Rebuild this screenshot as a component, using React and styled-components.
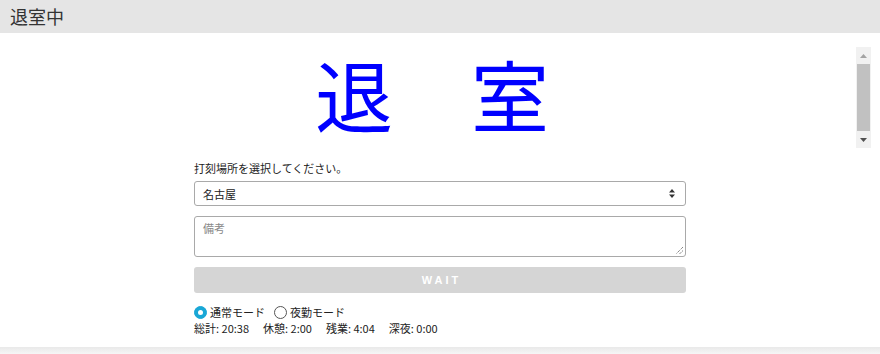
import React from "react";
import styled, { createGlobalStyle } from "styled-components";

const Global = createGlobalStyle`
  html, body { margin: 0; padding: 0; background: #fff; }
  body { font-family: "Noto Sans CJK JP", "Noto Sans", sans-serif; color: #222; }
  * { box-sizing: border-box; }
`;

const Page = styled.div`
  height: 354px;
  display: flex;
  flex-direction: column;
  overflow: hidden;
`;

const Header = styled.header`
  height: 33px;
  flex: none;
  background: #e5e5e5;
  padding-left: 10px;
  font-size: 18px;
  line-height: 33px;
  color: #333;
`;

const Main = styled.main`
  flex: 1;
  padding: 14px 8px 0;
  display: flex;
  flex-direction: column;
`;

const ScrollArea = styled.div`
  height: 101px;
  flex: none;
  margin-right: 1px;
  display: flex;
`;

const BigStatus = styled.div`
  flex: 1;
  color: #0000ff;
  font-size: 78px;
  line-height: 78px;
  padding-top: 7px;
  text-align: center;
  white-space: pre;
`;

const ScrollBar = styled.div`
  width: 15px;
  flex: none;
  background: #f1f1f1;
  display: flex;
  flex-direction: column;
  align-items: center;
`;

const ScrollButton = styled.div`
  height: 17px;
  width: 100%;
  display: flex;
  align-items: center;
  justify-content: center;
`;

const Thumb = styled.div`
  width: 13px;
  height: 67px;
  background: #c1c1c1;
`;

const ScrollRest = styled.div`
  flex: 1;
`;

const Form = styled.div`
  width: 492px;
  margin: 12px auto 0;
  display: flex;
  flex-direction: column;
`;

const Label = styled.div`
  font-size: 11px;
  line-height: 16px;
  color: #222;
  margin-bottom: 5px;
`;

const SelectBox = styled.div`
  height: 25px;
  border: 1px solid #a9a9a9;
  border-radius: 3px;
  display: flex;
  align-items: center;
  justify-content: space-between;
  padding: 0 10px 0 8px;
  font-size: 11px;
  color: #222;
`;

const Remarks = styled.div`
  position: relative;
  margin-top: 10px;
  height: 41px;
  border: 1px solid #a9a9a9;
  border-radius: 3px;
  padding: 3px 8px;
  font-size: 11px;
  line-height: 16px;
  color: #888;
`;

const Grip = styled.svg`
  position: absolute;
  right: 1px;
  bottom: 1px;
`;

const WaitButton = styled.div`
  margin-top: 10px;
  height: 26px;
  background: #d5d5d5;
  border-radius: 3px;
  color: #fff;
  font-family: "Liberation Sans", Arial, sans-serif;
  font-weight: bold;
  font-size: 11px;
  letter-spacing: 3px;
  display: flex;
  align-items: center;
  justify-content: center;
  padding-left: 3px;
`;

const RadioRow = styled.div`
  margin-top: 11px;
  display: flex;
  align-items: center;
  gap: 9px;
  font-size: 11px;
  line-height: 16px;
`;

const RadioItem = styled.label`
  display: flex;
  align-items: center;
  gap: 3px;
`;

const RadioDot = styled.span`
  width: 13px;
  height: 13px;
  border-radius: 50%;
  display: inline-flex;
  align-items: center;
  justify-content: center;
  background: ${(p) => (p.$checked ? "#19a7d6" : "#fff")};
  border: 1px solid ${(p) => (p.$checked ? "#19a7d6" : "#555")};
  &::after {
    content: "";
    width: 5px;
    height: 5px;
    border-radius: 50%;
    background: #fff;
    display: ${(p) => (p.$checked ? "block" : "none")};
  }
`;

const Stats = styled.div`
  display: flex;
  gap: 14px;
  font-size: 11px;
  line-height: 16px;
  color: #222;
`;

const Footer = styled.footer`
  height: 7px;
  flex: none;
  background: linear-gradient(#e9e9e9, #f6f6f6);
`;

export default function App() {
  return (
    <>
      <Global />
      <Page>
        <Header>退室中</Header>
        <Main>
          <ScrollArea>
            <BigStatus>{"退　室"}</BigStatus>
            <ScrollBar>
              <ScrollButton>
                <svg width="7" height="4" viewBox="0 0 7 4">
                  <path d="M3.5 0 L7 4 L0 4 Z" fill="#a3a3a3" />
                </svg>
              </ScrollButton>
              <Thumb />
              <ScrollRest />
              <ScrollButton>
                <svg width="7" height="4" viewBox="0 0 7 4">
                  <path d="M0 0 L7 0 L3.5 4 Z" fill="#505050" />
                </svg>
              </ScrollButton>
            </ScrollBar>
          </ScrollArea>
          <Form>
            <Label>打刻場所を選択してください。</Label>
            <SelectBox>
              <span>名古屋</span>
              <svg width="6" height="9" viewBox="0 0 6 9">
                <path d="M3 0 L6 3.5 L0 3.5 Z M3 9 L6 5.5 L0 5.5 Z" fill="#333" />
              </svg>
            </SelectBox>
            <Remarks>
              備考
              <Grip width="9" height="9" viewBox="0 0 9 9">
                <path d="M8 1 L1 8 M8 4.5 L4.5 8" stroke="#555" strokeWidth="1" strokeDasharray="1 1" />
              </Grip>
            </Remarks>
            <WaitButton>WAIT</WaitButton>
            <RadioRow>
              <RadioItem>
                <RadioDot $checked />
                通常モード
              </RadioItem>
              <RadioItem>
                <RadioDot />
                夜勤モード
              </RadioItem>
            </RadioRow>
            <Stats>
              <span>総計: 20:38</span>
              <span>休憩: 2:00</span>
              <span>残業: 4:04</span>
              <span>深夜: 0:00</span>
            </Stats>
          </Form>
        </Main>
        <Footer />
      </Page>
    </>
  );
}
